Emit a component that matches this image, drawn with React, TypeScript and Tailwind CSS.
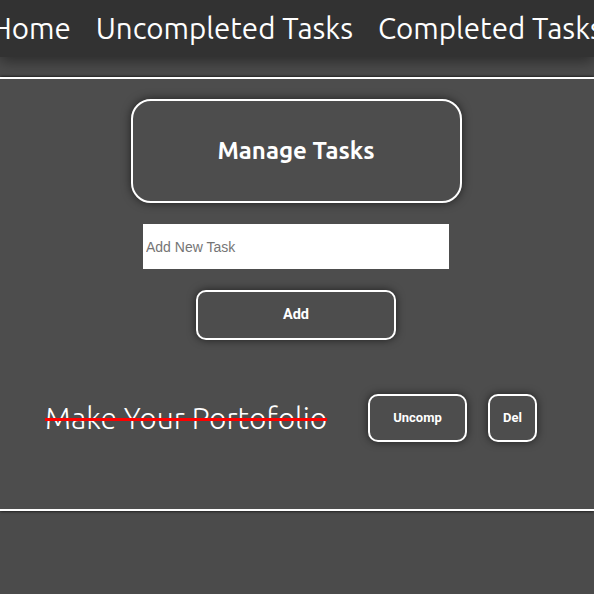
import React from 'react';

const ubuntu = "font-['Ubuntu','Open_Sans','Noto_Sans',sans-serif]";
const btn =
  "rounded-[10px] border-2 border-white bg-[#4d4d4d] text-white font-bold font-['Roboto','Liberation_Sans',sans-serif] shadow-[0_0_8px_rgba(0,0,0,0.6)]";

const TaskRow: React.FC<{ title: string }> = ({ title }) => (
  <div className="flex items-center pl-[45px]">
    <span className={`${ubuntu} text-[30px] font-light text-white line-through decoration-[#ff0000] decoration-[3px] w-[323px] leading-none`}>
      {title}
    </span>
    <button className={`${btn} w-[99px] h-[48px] text-[13px]`}>Uncomp</button>
    <button className={`${btn} ml-[21px] w-[49px] h-[48px] text-[13px]`}>Del</button>
  </div>
);

export default function App() {
  return (
    <div className="min-h-[594px] bg-[#4b4b4b] overflow-hidden">
      <nav className="h-[57px] bg-[#323232] shadow-[0_4px_14px_rgba(0,0,0,0.45)] flex items-center justify-center gap-[25px] whitespace-nowrap relative">
        {['Home', 'Uncompleted Tasks', 'Completed Tasks'].map((t) => (
          <a key={t} className={`${ubuntu} text-[29.5px] text-white leading-none shrink-0`}>
            {t}
          </a>
        ))}
      </nav>
      <main className="mt-[20px] h-[434px] border-y-2 border-white bg-[#4d4d4d] shadow-[0_0_3px_rgba(0,0,0,1)] flex flex-col items-center pt-[20px]">
        <div className="w-[331px] h-[104px] -translate-x-[1px] rounded-[20px] border-2 border-white flex items-center justify-center shadow-[0_0_10px_rgba(0,0,0,0.6)]">
          <h1 className={`${ubuntu} text-[24px] font-bold text-white`}>Manage Tasks</h1>
        </div>
        <input
          type="text"
          placeholder="Add New Task"
          className="mt-[21px] w-[306px] h-[45px] -translate-x-[1px] bg-white px-[3px] text-[14px] font-['Liberation_Sans',Arial,sans-serif] placeholder:text-[#757575] outline-none"
        />
        <button className={`${btn} mt-[21px] w-[200px] h-[50px] -translate-x-[1px] text-[14.5px]`}>Add</button>
        <div className="self-stretch mt-[54px]">
          <TaskRow title="Make Your Portofolio" />
        </div>
      </main>
    </div>
  );
}
